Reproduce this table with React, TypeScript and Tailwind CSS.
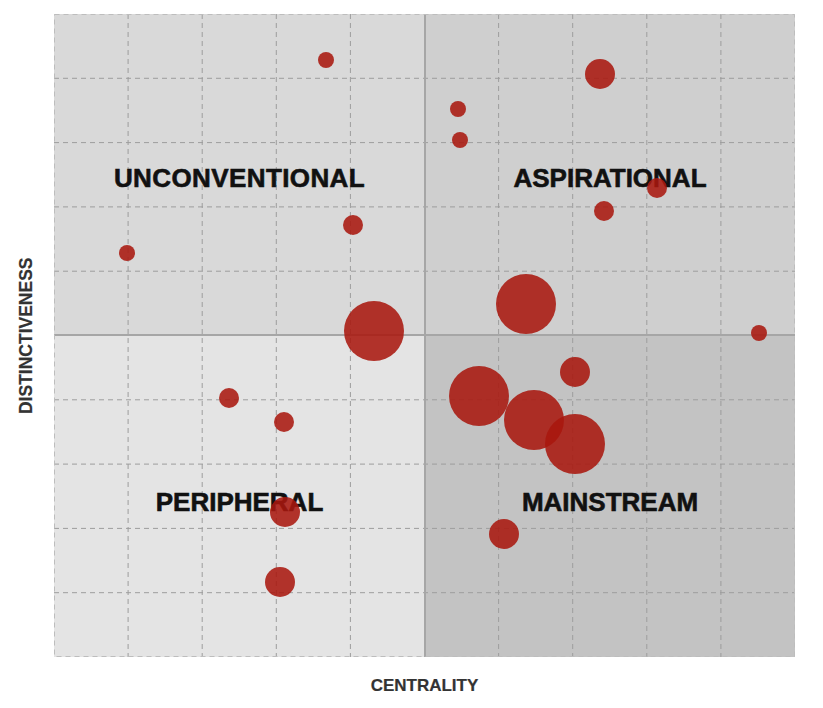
import React from "react";

const W = 741;
const H = 643;
const CX = 371; // center vertical line x (425 - 54)
const CY = 321; // center horizontal line y (335 - 14)

const bubbles: [number, number, number][] = [
  [326, 60, 8],
  [600, 74, 15],
  [458, 109, 8],
  [460, 140, 8],
  [657, 188, 10],
  [604, 211, 10],
  [353, 225, 10],
  [127, 253, 8],
  [526, 304, 30],
  [374, 331, 30],
  [759, 333, 8],
  [575, 372, 15],
  [479, 396, 30],
  [534, 420, 30],
  [575, 444, 30],
  [504, 534, 15],
  [229, 398, 10],
  [284, 422, 10],
  [285, 512, 15],
  [280, 582, 15],
];

const font = { fontFamily: '"Liberation Sans", Arial, sans-serif' };

export default function App() {
  const xs = Array.from({ length: 9 }, (_, i) => (i + 1) * (W / 10));
  const ys = Array.from({ length: 9 }, (_, i) => (i + 1) * (H / 10));
  const labelCls =
    "text-[26px] font-bold leading-none text-[#111111] [-webkit-text-stroke:0.6px_#111111]";
  return (
    <div className="w-[823px] h-[708px] bg-white flex flex-col" style={font}>
      <div className="flex pt-[14px]">
        <div className="w-[54px] flex items-center justify-center pr-[1px]">
          <span className="text-[17.5px] font-bold text-[#333333] whitespace-nowrap -rotate-90 block leading-none [-webkit-text-stroke:0.2px_#333333]">
            DISTINCTIVENESS
          </span>
        </div>
        <div className="relative w-[741px] h-[643px]">
          <svg width={W} height={H} className="absolute inset-0">
            <rect x={0} y={0} width={CX} height={CY} fill="#d9d9d9" />
            <rect x={CX} y={0} width={W - CX} height={CY} fill="#cfcfcf" />
            <rect x={0} y={CY} width={CX} height={H - CY} fill="#e4e4e4" />
            <rect x={CX} y={CY} width={W - CX} height={H - CY} fill="#c3c3c3" />
            {xs.map((x, i) =>
              i === 4 ? null : (
                <line key={"x" + i} x1={x} y1={0} x2={x} y2={H} stroke="#9d9d9d" strokeWidth={1} strokeDasharray="5 4" />
              )
            )}
            {ys.map((y, i) =>
              i === 4 ? null : (
                <line key={"y" + i} x1={0} y1={y} x2={W} y2={y} stroke="#9d9d9d" strokeWidth={1} strokeDasharray="5 4" />
              )
            )}
            <line x1={CX} y1={0} x2={CX} y2={H} stroke="#a6a6a6" strokeWidth={2} />
            <line x1={0} y1={CY} x2={W} y2={CY} stroke="#a6a6a6" strokeWidth={2} />
            <rect x={0.5} y={0.5} width={W - 1} height={H - 1} fill="none" stroke="#bdbdbd" strokeWidth={1} strokeDasharray="5 4" />
          </svg>
          <div className="absolute inset-0 grid grid-cols-[371px_370px] grid-rows-[321px_322px]">
            <div className="flex items-center justify-center pt-[7px]">
              <span className={`${labelCls} tracking-[0.4px]`}>UNCONVENTIONAL</span>
            </div>
            <div className="flex items-center justify-center pt-[7px]">
              <span className={labelCls}>ASPIRATIONAL</span>
            </div>
            <div className="flex items-center justify-center pt-[11px]">
              <span className={labelCls}>PERIPHERAL</span>
            </div>
            <div className="flex items-center justify-center pt-[11px]">
              <span className={labelCls}>MAINSTREAM</span>
            </div>
          </div>
          <svg width={W} height={H} className="absolute inset-0">
            {bubbles.map(([x, y, r], i) => (
              <circle key={i} cx={x - 54} cy={y - 14} r={r} fill="#a9170e" fillOpacity={0.87} />
            ))}
          </svg>
        </div>
      </div>
      <div className="flex pl-[54px] w-[795px] justify-center pt-[20px]">
        <span className="text-[17px] font-bold text-[#333333] leading-none [-webkit-text-stroke:0.2px_#333333]">
          CENTRALITY
        </span>
      </div>
    </div>
  );
}
